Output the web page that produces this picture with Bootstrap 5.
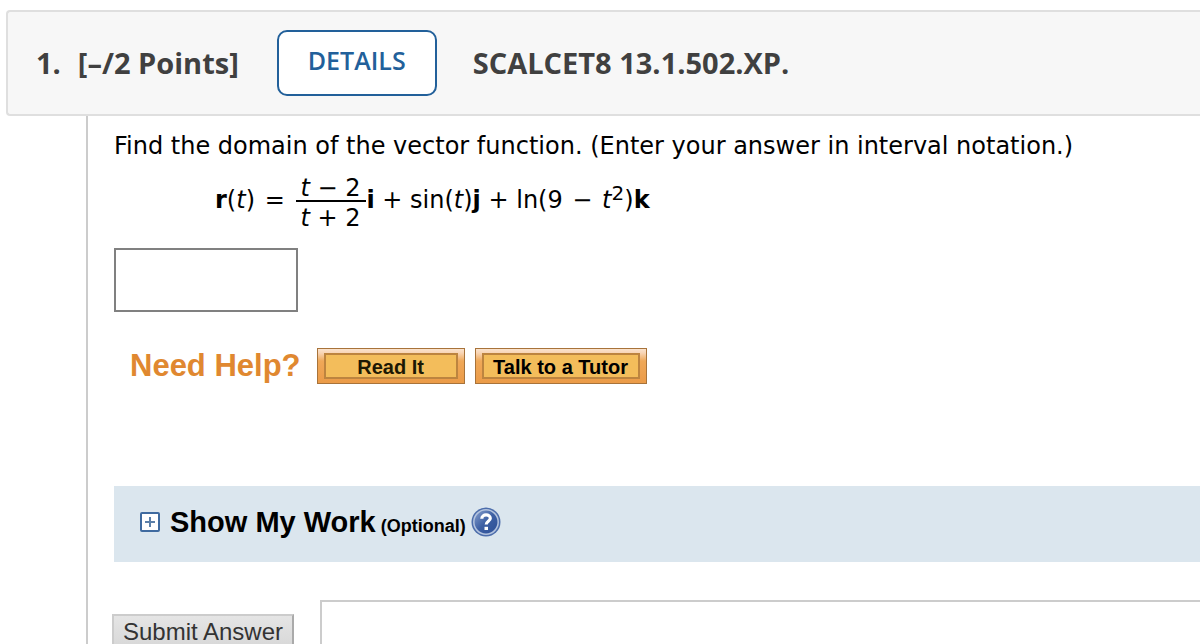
<!DOCTYPE html>
<html lang="en">
<head>
<meta charset="utf-8">
<meta name="viewport" content="width=device-width, initial-scale=1">
<title>SCALCET8 13.1.502.XP.</title>
<link rel="stylesheet" href="https://cdn.jsdelivr.net/npm/bootstrap@5.3.0/dist/css/bootstrap.min.css">
<style>
  body { font-family: "DejaVu Sans", Verdana, sans-serif; font-size: 24px; line-height: 32px; color: #000; overflow-x: hidden; }
  .q-header { margin: 10px 0 0 6px; height: 106px; padding-left: 28px; background: #f7f7f7; border: 2px solid #dfdfdf; border-right: 0; border-radius: 4px 0 0 4px; font: 700 29px/36px "Open Sans", sans-serif; color: #404040; }
  .q-points { margin: 0 38px 0 17px; }
  .btn-details { width: 160px; height: 66px; margin-right: 36px; padding: 0 0 4px; border: 2px solid #22609a; border-radius: 10px; background: #fff; color: #22609a; font-size: 25px; font-weight: 600; }
  .q-body { margin-left: 86px; padding-left: 24px; border-left: 2px solid #ccc; }
  .q-content { padding: 14px 0 0 2px; }
  .q-formula { margin: 12px 0 0 101px; height: 58px; }
  .q-formula > span:not(.frac) { padding-bottom: 6px; }
  .frac { margin-left: 2px; }
  .frac-top { height: 27px; border-bottom: 2px solid #000; padding: 0 6px 0 4px; line-height: 26px; }
  .frac-bottom { padding-left: 4px; line-height: 32px; height: 29px; }
  .op { margin: 0 2px; }
  .q-formula sup { font-size: 20px; top: -8px; line-height: 0; vertical-align: baseline; }
  .answer { width: 184px; height: 64px; margin-top: 16px; border: 2px solid #808080; border-radius: 0; }
  .help-row { margin: 36px 0 0 16px; height: 36px; font-family: "Liberation Sans", Arial, sans-serif; }
  .help-title { font-size: 31px; font-weight: 700; color: #e08830; margin-right: 16px; }
  .btn-help { height: 36px; padding: 4px 6px; border: 1px solid #a8733a; border-radius: 0; background: linear-gradient(#fae3cd 0, #f8d5b5 4px, #efa858 12px, #eb9b48 100%); color: #1c1804; font-size: 20px; font-weight: 700; line-height: 24px; }
  .btn-help span { display: block; border: 2px solid #bd843f; background: #f3bd5b; height: 26px; line-height: 24px; }
  .btn-read { width: 148px; margin-right: 10px; }
  .btn-tutor { width: 172px; color: #000; }
  .work-bar { margin-top: 102px; height: 76px; padding: 0 0 4px 26px; background: #dbe6ee; font-family: "Liberation Sans", Arial, sans-serif; font-weight: 700; }
  .work-title { font-size: 29px; color: #000; margin: 0 5px 0 10px; }
  .work-note { font-size: 18px; padding-top: 7px; margin-right: 5px; }
  .submit-row { margin-top: 38px; }
  .btn-submit { width: 182px; height: 46px; margin: 14px 26px 0 0; padding: 0 0 10px; border: 2px solid #ccc; border-right-color: #aaa; border-bottom-color: #aaa; border-radius: 0; background: linear-gradient(#e5e5e5, #d3d3d3); color: #333; font: 24px/30px "Liberation Sans", Arial, sans-serif; }
  .response { height: 80px; border: 2px solid #ccc; border-right: 0; border-radius: 0; resize: none; }
</style>
</head>
<body>
<header class="q-header d-flex align-items-center">
  <span>1.</span>
  <span class="q-points">[–/2 Points]</span>
  <button type="button" class="btn btn-details">DETAILS</button>
  <span>SCALCET8 13.1.502.XP.</span>
</header>
<main class="q-body">
  <div class="q-content">
    <label for="answer" class="d-block">Find the domain of the vector function. (Enter your answer in interval notation.)</label>
    <div class="q-formula d-flex align-items-center text-nowrap">
      <span><b>r</b>(<i>t</i>) <span class="op">=</span>&nbsp;</span>
      <span class="frac d-inline-flex flex-column">
        <span class="frac-top"><i>t</i> − 2</span>
        <span class="frac-bottom"><i>t</i> + 2</span>
      </span>
      <span><b>i</b> + sin(<i>t</i>)<b>j</b> + ln(9 <span class="op">−</span> <i>t</i><sup>2</sup>)<b>k</b></span>
    </div>
    <input id="answer" type="text" class="answer form-control">
    <div class="help-row d-flex align-items-center">
      <span class="help-title">Need Help?</span>
      <button type="button" class="btn btn-help btn-read"><span>Read It</span></button>
      <button type="button" class="btn btn-help btn-tutor"><span>Talk to a Tutor</span></button>
    </div>
    <section class="work-bar d-flex align-items-center">
      <svg width="20" height="20" viewBox="0 0 20 20" aria-hidden="true"><rect x="1" y="1" width="18" height="18" rx="1" fill="#fff" stroke="#3f6a9f" stroke-width="2"/><path d="M10 5v10M5 10h10" stroke="#5b7fa9" stroke-width="2"/></svg>
      <a href="#" class="work-title text-decoration-none">Show My Work</a>
      <span class="work-note">(Optional)</span>
      <svg width="30" height="30" viewBox="0 0 30 30" role="img" aria-label="Help">
        <defs><linearGradient id="orb" x1="0" y1="0" x2="1" y2="1"><stop offset="0" stop-color="#8ba3cf"/><stop offset=".5" stop-color="#3c5fa3"/><stop offset="1" stop-color="#2c4f96"/></linearGradient></defs>
        <circle cx="15" cy="15" r="14.500" fill="#4c6dab"/>
        <circle cx="15" cy="15" r="12.200" fill="url(#orb)" stroke="#b3c3de" stroke-width="1.500"/>
        <path d="M10.800 11.800C10.800 6.600 19.300 6.800 19.300 11.200C19.300 14.300 15.200 14.200 15.200 17.600" fill="none" stroke="#fff" stroke-width="3.200"/>
        <rect x="13.500" y="19.800" width="3.500" height="3.200" fill="#fff"/>
      </svg>
    </section>
  </div>
  <div class="submit-row d-flex align-items-start">
    <button type="submit" class="btn btn-submit flex-shrink-0">Submit Answer</button>
    <textarea class="response form-control" aria-label="Response"></textarea>
  </div>
</main>
<script src="https://cdn.jsdelivr.net/npm/bootstrap@5.3.0/dist/js/bootstrap.bundle.min.js"></script>
</body>
</html>
